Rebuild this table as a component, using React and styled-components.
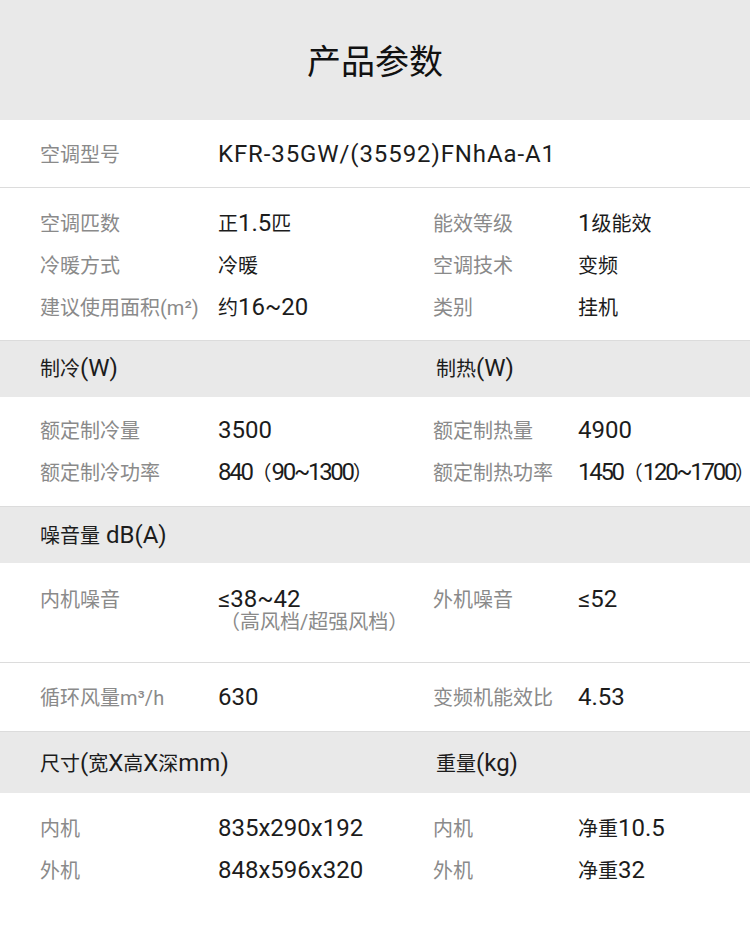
import React from 'react';
import styled, { createGlobalStyle } from 'styled-components';

const Global = createGlobalStyle`
  html, body { margin: 0; padding: 0; background: #fff; }
  body { font-family: Roboto, "Noto Sans CJK SC", sans-serif; font-size: 16px; -webkit-font-smoothing: antialiased; }
`;

const Page = styled.div`
  width: 750px;
  background: #fff;
  overflow: hidden;
`;

const Header = styled.header`
  height: 120px;
  background: #e9e9e9;
  display: flex;
  align-items: center;
  justify-content: center;
`;

const Title = styled.h1`
  margin: 0;
  font-family: "Noto Sans CJK SC", sans-serif;
  font-weight: 400;
  font-size: 34px;
  line-height: 40px;
  color: #111;
`;

const Block = styled.section`
  padding: ${(p) => p.$pt}px 0 ${(p) => p.$pb}px 40px;
  border-bottom: ${(p) => (p.$last ? 'none' : '1px solid #dcdcdc')};
  display: flex;
  flex-direction: column;
`;

const Row = styled.div`
  display: grid;
  grid-template-columns: 178px 215px 145px 1fr;
  align-items: start;
`;

const Label = styled.div`
  height: 42px;
  line-height: 42px;
  color: #8a8a8a;
  white-space: nowrap;
`;

const Value = styled.div`
  min-height: 42px;
  line-height: 42px;
  color: #1c1c1c;
  white-space: nowrap;
  grid-column: span ${(p) => p.$span || 1};
`;

const ValueLine = styled.div`
  height: 42px;
  line-height: 42px;
`;

const Sub = styled.div`
  height: 22px;
  line-height: 22px;
  margin-top: -12px;
  padding-left: 2px;
  color: #8a8a8a;
`;

const Band = styled.div`
  background: #e9e9e9;
  height: ${(p) => p.$h}px;
  box-sizing: border-box;
  padding: ${(p) => p.$shift}px 0 0 40px;
  display: grid;
  grid-template-columns: 396px 1fr;
  align-items: center;
  color: #1c1c1c;
  line-height: 30px;
`;

const Cjk = styled.span`
  font-family: "Noto Sans CJK SC", sans-serif;
  font-size: 20px;
  line-height: 1;
`;

const Lat = styled.span`
  font-family: Roboto, "DejaVu Sans", sans-serif;
  font-size: ${(p) => p.$size}px;
  line-height: 1;
  letter-spacing: ${(p) => (p.$tight ? '-2.3px' : p.$ls ? `${p.$ls}px` : '0')};
`;

const CJK_RE = /([\u2e80-\u9fff\u3000-\u303f\uff00-\uffef]+)/;

function T({ children, size = 24, tight, ls }) {
  const parts = String(children).split(CJK_RE).filter(Boolean);
  return (
    <>
      {parts.map((part, i) =>
        CJK_RE.test(part) ? (
          <Cjk key={i}>{part}</Cjk>
        ) : (
          <Lat key={i} $size={size} $tight={tight} $ls={ls}>
            {part}
          </Lat>
        )
      )}
    </>
  );
}

const L = ({ children }) => (
  <Label>
    <T size={20}>{children}</T>
  </Label>
);

const V = ({ children, tight, span, ls }) => (
  <Value $span={span}>
    <T tight={tight} ls={ls}>{children}</T>
  </Value>
);

const Pair = ({ a, b, c, d, tightB, tightD }) => (
  <Row>
    <L>{a}</L>
    <V tight={tightB}>{b}</V>
    <L>{c}</L>
    <V tight={tightD}>{d}</V>
  </Row>
);

const Head = ({ h, shift = 4, left, right }) => (
  <Band $h={h} $shift={shift}>
    <div>
      <T>{left}</T>
    </div>
    <div>{right ? <T>{right}</T> : null}</div>
  </Band>
);

export default function App() {
  return (
    <Page>
      <Global />
      <Header>
        <Title>产品参数</Title>
      </Header>

      <Block $pt={16} $pb={9}>
        <Row>
          <L>空调型号</L>
          <V span={3} ls={0.9}>KFR-35GW/(35592)FNhAa-A1</V>
        </Row>
      </Block>

      <Block $pt={17} $pb={9}>
        <Pair a="空调匹数" b="正1.5匹" c="能效等级" d="1级能效" />
        <Pair a="冷暖方式" b="冷暖" c="空调技术" d="变频" />
        <Pair a="建议使用面积(m²)" b="约16~20" c="类别" d="挂机" />
      </Block>

      <Head h={56} left="制冷(W)" right="制热(W)" />

      <Block $pt={15} $pb={10}>
        <Pair a="额定制冷量" b="3500" c="额定制热量" d="4900" />
        <Pair
          a="额定制冷功率"
          b="840（90~1300）"
          c="额定制热功率"
          d="1450（120~1700）"
          tightB
          tightD
        />
      </Block>

      <Head h={56} shift={5} left="噪音量 dB(A)" />

      <Block $pt={18} $pb={29}>
        <Row>
          <L>内机噪音</L>
          <Value>
            <ValueLine>
              <T>≤38~42</T>
            </ValueLine>
            <Sub>
              <T size={20}>（高风档/超强风档）</T>
            </Sub>
          </Value>
          <L>外机噪音</L>
          <V>≤52</V>
        </Row>
      </Block>

      <Block $pt={16} $pb={10}>
        <Pair a="循环风量m³/h" b="630" c="变频机能效比" d="4.53" />
      </Block>

      <Head h={61} shift={6} left="尺寸(宽X高X深mm)" right="重量(kg)" />

      <Block $pt={17} $pb={60} $last>
        <Pair a="内机" b="835x290x192" c="内机" d="净重10.5" />
        <Pair a="外机" b="848x596x320" c="外机" d="净重32" />
      </Block>
    </Page>
  );
}
